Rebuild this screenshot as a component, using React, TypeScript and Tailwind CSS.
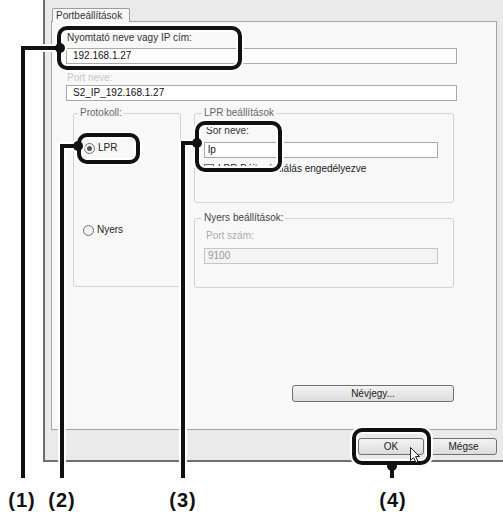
import React from "react";

function WinButton({ label, w }: { label: string; w: string }) {
  return (
    <div
      className={`${w} h-[17px] rounded-[3px] border border-[#707070] bg-linear-to-b from-[#f3f3f3] to-[#dcdcdc] flex items-center justify-center text-[#222] leading-[12px]`}
    >
      {label}
    </div>
  );
}

function Radio({ checked }: { checked?: boolean }) {
  return (
    <div className="w-[11px] h-[11px] rounded-full border border-[#6f6f6f] bg-[#f4f4f4] flex items-center justify-center">
      {checked && <div className="w-[5px] h-[5px] rounded-full bg-[#555]" />}
    </div>
  );
}

function Callouts() {
  const rects = [
    { x: 59, y: 28, w: 181, h: 40 },
    { x: 79, y: 135, w: 59, h: 27 },
    { x: 197, y: 123, w: 83, h: 47 },
    { x: 354, y: 430, w: 75, h: 33 },
  ];
  const lines = [
    "M60 48 H23 V478",
    "M78 146 H62 V478",
    "M197 143 H183 V478",
    "M392 466 V478",
  ];
  const dots = [
    [60, 48],
    [78, 146],
    [197, 143],
    [392, 466],
  ];
  const labels = [
    { x: 22, t: "(1)" },
    { x: 62, t: "(2)" },
    { x: 183, t: "(3)" },
    { x: 393, t: "(4)" },
  ];
  return (
    <svg
      className="absolute inset-0 pointer-events-none"
      width="503"
      height="512"
      viewBox="0 0 503 512"
    >
      {rects.map((r, i) => (
        <rect key={"h" + i} x={r.x} y={r.y} width={r.w} height={r.h} rx="8" fill="none" stroke="#fff" strokeWidth="8" />
      ))}
      {lines.map((d, i) => (
        <path key={"lh" + i} d={d} fill="none" stroke="#fff" strokeWidth="8" />
      ))}
      {dots.map(([cx, cy], i) => (
        <circle key={"dh" + i} cx={cx} cy={cy} r="7" fill="#fff" />
      ))}
      {rects.map((r, i) => (
        <rect key={"r" + i} x={r.x} y={r.y} width={r.w} height={r.h} rx="8" fill="none" stroke="#111" strokeWidth="4" />
      ))}
      {lines.map((d, i) => (
        <path key={"l" + i} d={d} fill="none" stroke="#111" strokeWidth="4" />
      ))}
      {dots.map(([cx, cy], i) => (
        <circle key={"d" + i} cx={cx} cy={cy} r="5" fill="#111" />
      ))}
      {labels.map((l, i) => (
        <text
          key={"t" + i}
          x={l.x}
          y="507"
          textAnchor="middle"
          fontSize="20"
          fontWeight="bold"
          letterSpacing="1"
          fontFamily="'Liberation Sans', Arial, sans-serif"
          fill="#111"
        >
          {l.t}
        </text>
      ))}
      {/* mouse pointer over OK */}
      <path
        d="M410.5 447.5 V460.5 L413.5 457.5 L416 462.5 L418 461.5 L415.5 456.5 L419.5 456.5 Z"
        fill="#fff"
        stroke="#222"
        strokeWidth="1"
      />
    </svg>
  );
}

export default function App() {
  return (
    <div className="relative w-[503px] h-[512px] bg-white overflow-hidden font-['Liberation_Sans',Arial,sans-serif] text-[10px] leading-[12px] text-[#222]">
      {/* dialog window */}
      <div className="ml-[43px] w-[460px] h-[462px] bg-[#eaeaea] border-l-2 border-b-2 border-[#6f6f6f] pl-[6px] pt-[8px]">
        <div className="relative z-10 ml-[1px] -mb-px w-[78px] h-[14px] border border-b-0 border-[#9c9c9c] bg-[#f8f8f8] rounded-t-[2px] pl-[3px] leading-[13px] text-[#333]">
          Portbeállítások
        </div>
        <div className="w-[446px] h-[409px] border border-[#a3a3a3] bg-[#f8f8f8] pt-[10px] pl-[14px] flex flex-col">
          <div className="ml-[1px] h-[12px] text-[#333]">Nyomtató neve vagy IP cím:</div>
          <div className="mt-[4px] w-[391px] h-[16px] border border-[#a9a9a9] bg-white pl-[6px] leading-[14px] text-[#111]">
            192.168.1.27
          </div>
          <div className="mt-[8px] ml-[1px] h-[12px] text-[#c8c8c8]">Port neve:</div>
          <div className="mt-[1px] w-[391px] h-[16px] border border-[#a9a9a9] bg-white pl-[6px] leading-[14px] text-[#111]">
            S2_IP_192.168.1.27
          </div>

          <div className="mt-[6px] ml-[7px] flex gap-[13px]">
            <fieldset className="w-[108px] h-[180px] border border-[#d3d3d3] rounded-[3px]">
              <legend className="ml-[4px] px-[2px] h-[12px] text-[#666]">Protokoll:</legend>
              <div className="mt-[23px] ml-[10px] h-[12px] flex items-center gap-[3px]">
                <Radio checked />
                <span>LPR</span>
              </div>
              <div className="mt-[70px] ml-[9px] h-[12px] flex items-center gap-[3px]">
                <Radio />
                <span>Nyers</span>
              </div>
            </fieldset>

            <div className="w-[260px] flex flex-col">
              <fieldset className="h-[96px] border border-[#d3d3d3] rounded-[3px]">
                <legend className="ml-[7px] px-[2px] h-[12px] text-[#666]">LPR beállítások</legend>
                <div className="mt-[6px] ml-[11px] h-[12px] text-[#333]">Sor neve:</div>
                <div className="mt-[5px] ml-[9px] w-[234px] h-[16px] border border-[#a9a9a9] bg-white pl-[3px] leading-[14px] text-[#111]">
                  lp
                </div>
                <div className="mt-[5px] ml-[9px] h-[12px] flex items-center gap-[4px]">
                  <div className="w-[10px] h-[10px] border border-[#6f6f6f] bg-[#f4f4f4]" />
                  <span>LPR Bájtszámlálás engedélyezve</span>
                </div>
              </fieldset>
              <fieldset className="mt-[9px] h-[76px] border border-[#d3d3d3] rounded-[3px]">
                <legend className="ml-[7px] px-[2px] h-[12px] text-[#444]">Nyers beállítások:</legend>
                <div className="mt-[6px] ml-[11px] h-[12px] text-[#aaa]">Port szám:</div>
                <div className="mt-[6px] ml-[9px] w-[234px] h-[16px] border border-[#c6c6c6] bg-[#f3f3f3] pl-[3px] leading-[14px] text-[#9a9a9a]">
                  9100
                </div>
              </fieldset>
            </div>
          </div>

          <div className="mt-[97px] w-[388px] flex justify-end">
            <WinButton label="Névjegy..." w="w-[162px]" />
          </div>
        </div>

        <div className="mt-[8px] w-[446px] flex justify-end gap-[6px]">
          <WinButton label="OK" w="w-[66px]" />
          <WinButton label="Mégse" w="w-[67px]" />
        </div>
      </div>

      <Callouts />
    </div>
  );
}
